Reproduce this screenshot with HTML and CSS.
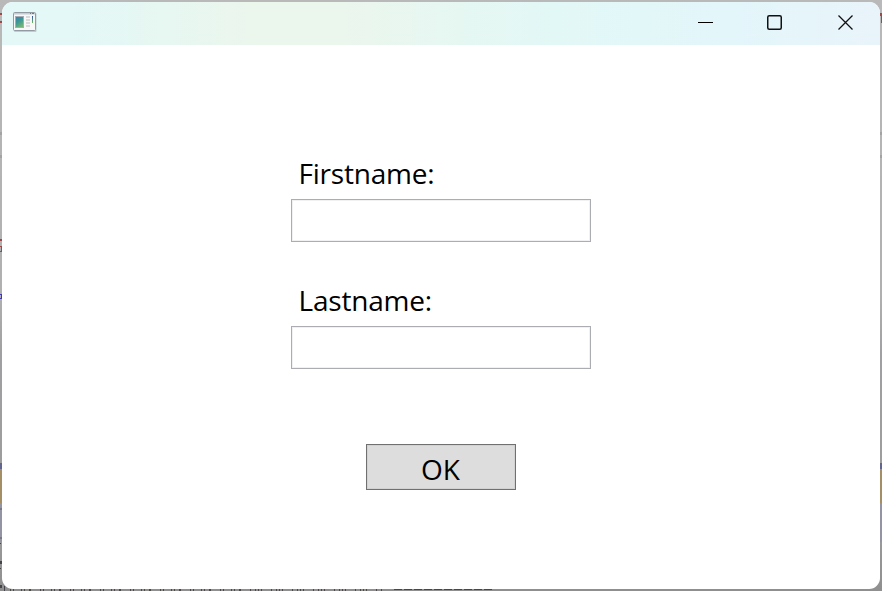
FILE: index.html
```
<!DOCTYPE html>
<html lang="en">
<head>
<meta charset="utf-8">
<title>Name form</title>
<link rel="stylesheet" href="styles.css">
</head>
<body>
<svg class="backdrop" width="882" height="591" viewBox="0 0 882 591" shape-rendering="crispEdges" aria-hidden="true">
  <path fill="#a04748" d="M0 13h2v2H0zM0 21h2v2H0zM880 13h2v3h-2zM881 16h1v7h-1zM0 239h2v2H0zM0 246h2v1H0zM1 247h1v4H1zM0 251h2v1H0z"/>
  <path fill="#4038b0" d="M0 294h2v1H0zM0 298h2v1H0zM1 295h1v3h-1z"/>
  <path fill="#a3a3a4" d="M0 132h2v3H0zM0 155h2v3H0zM880 132h2v3h-2zM880 155h2v3h-2z"/>
  <path fill="#62658d" d="M0 463h2v6H0zM880 463h2v6h-2z"/>
  <path fill="#a48e65" d="M0 469h2v34H0zM880 469h2v34h-2z"/>
  <path fill="#9294a4" d="M0 503h2v39H0zM880 503h2v39h-2z"/>
  <path fill="#777985" d="M0 508h2v2H0zM0 537h2v2H0z"/>
  <path fill="#46444a" d="M0 543h1v1H0zM0 561h2v3H0zM0 568h1v1H0zM0 585h2v3H0zM4 586h1v5H4z"/>
  <path stroke="#4f4947" stroke-width="2" stroke-dasharray="1 2 1 7 1 2 1 4 2 9" d="M10 590h240"/>
  <path stroke="#4f4947" stroke-width="2" stroke-dasharray="1 4 1 2 1 2 1 9" d="M250 590h133"/>
  <path stroke="#4a4645" d="M394 589.5h99" stroke-dasharray="8 2"/>
</svg>
<main class="window">
  <header class="titlebar">
    <svg class="app-icon" width="24" height="21" viewBox="0 0 24 21" aria-hidden="true">
      <defs><linearGradient id="panel" x1="0" y1="0" x2=".5" y2="1"><stop stop-color="#3f83ab"/><stop offset=".5" stop-color="#3b9696"/><stop offset="1" stop-color="#70b575"/></linearGradient>
      <linearGradient id="bar" x1="0" y1="0" x2="0" y2="1"><stop stop-color="#3151a0"/><stop offset="1" stop-color="#69bd60"/></linearGradient></defs>
      <rect x="1" y="1" width="22.5" height="19" rx="1" fill="#b8cfcd"/>
      <rect x=".5" y=".5" width="22" height="18" rx="1" fill="#f8f8f8" stroke="#929ba4"/>
      <path d="M1 1h21v1.500H1z" fill="#c6ccd2"/><path d="M17 1h1v1h-1zm2 0h2v1h-2z" fill="#707b88"/>
      <rect x="2.500" y="4.500" width="8" height="11" fill="url(#panel)" stroke="#a6abb5"/>
      <path d="M13 4h4v2h-4zm0 3h4v2h-4zm0 3h4v2h-4zm0 3h4v2h-4z" fill="#d7d9db"/>
      <path d="M19 4h1v7h-1z" fill="url(#bar)"/>
    </svg>
    <nav class="controls">
      <button aria-label="Minimize"><svg width="16" height="16"><path d="M0 7.500h15" stroke="#000" fill="none"/></svg></button>
      <button aria-label="Maximize"><svg width="16" height="16"><rect x=".75" y=".75" width="13.500" height="13.500" rx="1.500" stroke="#111" stroke-width="1.500" fill="none"/></svg></button>
      <button aria-label="Close"><svg width="16" height="16"><path d="M.5.5l14 14M14.500.5l-14 14" stroke="#111" stroke-width="1.300" fill="none"/></svg></button>
    </nav>
  </header>
  <form class="form">
    <label for="first">Firstname:</label>
    <input id="first" type="text">
    <label for="last">Lastname:</label>
    <input id="last" type="text">
    <button class="ok" type="button">OK</button>
  </form>
</main>
</body>
</html>
```
FILE: styles.css
```
* { box-sizing: border-box; }
body {
  margin: 0;
  width: 882px;
  height: 591px;
  padding: 2px;
  overflow: hidden;
  background: linear-gradient(#b9b9b9, #b0b0b0 50%, #a0a0a2 60%, #9b9b9b 90%, #8f8f8f);
  font-family: "Open Sans", "Noto Sans", sans-serif;
  color: #000;
}
.backdrop { position: absolute; left: 0; top: 0; }
.window {
  position: relative;
  height: 587px;
  border-radius: 11px;
  overflow: hidden;
  background: #fff;
}
.titlebar {
  display: flex;
  justify-content: space-between;
  height: 43px;
  padding: 10px 0 0 11px;
  background: linear-gradient(90deg, #e3f8f7 0 8%, #ebf6ed 28% 39%, #e2f8f6 63%, #e3f6fa 83%, #e9f4fa 100%);
}
.controls {
  display: grid;
  grid-template-columns: 69px 71px 16px;
  padding: 3px 26px 0 0;
}
.controls button {
  width: 16px;
  height: 16px;
  padding: 0;
  border: 0;
  background: none;
}
.controls svg { display: block; }
.form {
  display: flex;
  flex-direction: column;
  width: 300px;
  margin: 109px 0 0 289px;
}
label {
  height: 45px;
  padding-left: 7.500px;
  font-size: 28px;
  line-height: 38px;
  letter-spacing: -0.2px;
  white-space: nowrap;
}
input {
  width: 300px;
  height: 43px;
  margin-bottom: 39px;
  border: 1px solid #abadb3;
  background: #fff;
  box-shadow: inset 0 0 0 1px #f1f1f3;
  outline: none;
}
.ok {
  align-self: center;
  width: 150px;
  height: 46px;
  margin-top: 36px;
  padding: 4px 1px 0 0;
  border: 1px solid #707070;
  background: #ddd;
  box-shadow: inset 0 0 0 1px #d2d2d2;
  font: 28px/38px "Open Sans", "Noto Sans", sans-serif;
  color: #000;
}
```
